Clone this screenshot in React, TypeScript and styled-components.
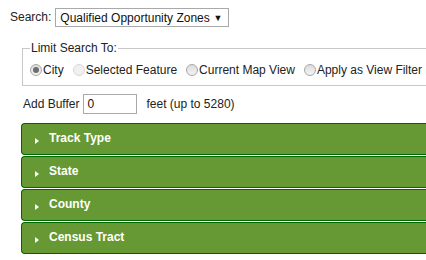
import React from "react";
import styled, { createGlobalStyle } from "styled-components";

const Global = createGlobalStyle`
  html, body { margin: 0; padding: 0; background: #fff; overflow: hidden; }
  body { font-family: "Liberation Sans", Arial, sans-serif; font-size: 12px; color: #222; }
`;

const Page = styled.div`
  width: 470px;
  padding: 8px 0 0 10px;
  box-sizing: border-box;
`;

const SearchRow = styled.div`
  display: flex;
  align-items: center;
  height: 19px;
  gap: 4px;
`;

const Label = styled.span`
  font-size: 12px;
  line-height: 15px;
  color: #222;
  white-space: nowrap;
`;

const FakeSelect = styled.div`
  box-sizing: border-box;
  height: 19px;
  width: 174px;
  border: 1px solid #a9a9a9;
  display: flex;
  align-items: center;
  justify-content: space-between;
  padding: 0 6px 0 4px;
  font-size: 12px;
  color: #111;
  white-space: nowrap;
`;

const Caret = styled.span`
  font-size: 9px;
  color: #111;
`;

const FieldSet = styled.fieldset`
  margin: 14px 0 0 12px;
  padding: 6px 0 7px 7px;
  border: 1px solid #c8c8c8;
  border-right: none;
  min-width: 0;
`;

const Legend = styled.legend`
  padding: 0 1px;
  font-size: 12px;
  line-height: 15px;
  color: #222;
`;

const RadioRow = styled.div`
  display: flex;
  align-items: center;
  height: 16px;
`;

const RadioItem = styled.label`
  display: flex;
  align-items: center;
  margin-right: 9px;
  font-size: 12px;
  color: #222;
  white-space: nowrap;
`;

const RadioDot = styled.span<{ $checked?: boolean; $faint?: boolean }>`
  box-sizing: border-box;
  width: 12px;
  height: 12px;
  border-radius: 50%;
  border: 1px solid ${(p) => (p.$faint ? "#d8d8d8" : "#a8a8a8")};
  background: ${(p) => (p.$faint ? "#f0f0f0" : "linear-gradient(#dcdcdc, #f4f4f4)")};
  display: flex;
  align-items: center;
  justify-content: center;
  margin-right: 1px;
  &::after {
    content: "";
    display: ${(p) => (p.$checked ? "block" : "none")};
    width: 6px;
    height: 6px;
    border-radius: 50%;
    background: #6e6e6e;
  }
`;

const BufferRow = styled.div`
  display: flex;
  align-items: center;
  margin: 8px 0 0 13px;
  height: 20px;
`;

const BufferInput = styled.div`
  box-sizing: border-box;
  width: 54px;
  height: 20px;
  border: 1px solid #a9a9a9;
  margin: 0 9px 0 4px;
  padding-left: 3px;
  display: flex;
  align-items: center;
  font-size: 12px;
  color: #111;
`;

const Accordion = styled.div`
  margin: 9px 0 0 11px;
  display: flex;
  flex-direction: column;
  gap: 1px;
`;

const Bar = styled.div`
  box-sizing: border-box;
  height: 32px;
  background: #669933;
  border: 1px solid #006600;
  border-right: none;
  border-radius: 4px 0 0 4px;
  display: flex;
  align-items: center;
  padding: 0 0 3px 13px;
  color: #fff;
  font-weight: bold;
  font-size: 12px;
`;

const Arrow = styled.span`
  width: 0;
  height: 0;
  border-top: 3px solid transparent;
  border-bottom: 3px solid transparent;
  border-left: 4px solid #fff;
  margin: 6px 10px 0 0;
`;

const items = ["Track Type", "State", "County", "Census Tract"];

export default function App() {
  return (
    <>
      <Global />
      <Page>
        <SearchRow>
          <Label>Search:</Label>
          <FakeSelect>
            <span>Qualified Opportunity Zones</span>
            <Caret>▼</Caret>
          </FakeSelect>
        </SearchRow>
        <FieldSet>
          <Legend>Limit Search To:</Legend>
          <RadioRow>
            <RadioItem>
              <RadioDot $checked />City
            </RadioItem>
            <RadioItem>
              <RadioDot $faint />Selected Feature
            </RadioItem>
            <RadioItem>
              <RadioDot />Current Map View
            </RadioItem>
            <RadioItem>
              <RadioDot />Apply as View Filter
            </RadioItem>
          </RadioRow>
        </FieldSet>
        <BufferRow>
          <Label>Add Buffer</Label>
          <BufferInput>0</BufferInput>
          <Label>feet (up to 5280)</Label>
        </BufferRow>
        <Accordion>
          {items.map((t) => (
            <Bar key={t}>
              <Arrow />
              {t}
            </Bar>
          ))}
        </Accordion>
      </Page>
    </>
  );
}
